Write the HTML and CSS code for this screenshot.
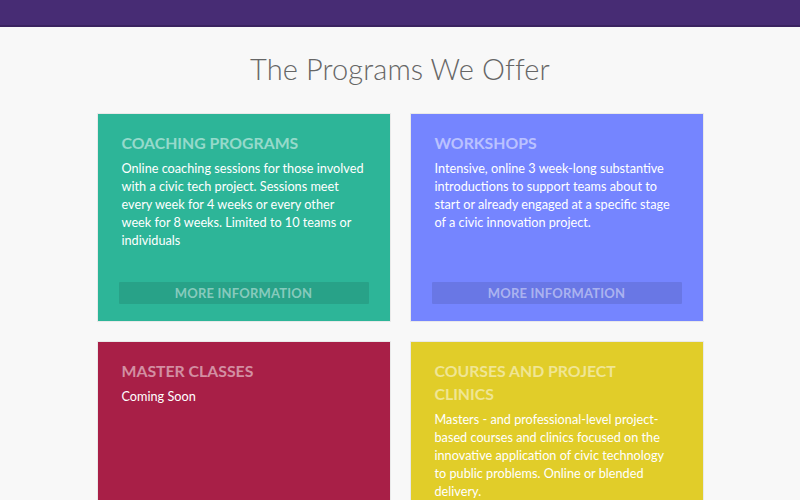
FILE: index.html
```html
<!DOCTYPE html>
<html>
<head>
<meta charset="utf-8">
<link rel="stylesheet" href="styles.css">
</head>
<body>
<header class="topbar"></header>
<main class="programs">
  <h1 class="title">The Programs We Offer</h1>
  <div class="grid">
    <section class="card teal">
      <div class="card-body">
        <h2 class="card-title">Coaching Programs</h2>
        <p class="card-text">Online coaching sessions for those involved with a civic tech project. Sessions meet every week for 4 weeks or every other week for 8 weeks. Limited to 10 teams or individuals</p>
      </div>
      <a class="more">More Information</a>
    </section>
    <section class="card blue">
      <div class="card-body">
        <h2 class="card-title">Workshops</h2>
        <p class="card-text">Intensive, online 3 week-long substantive introductions to support teams about to start or already engaged at a specific stage of a civic innovation project.</p>
      </div>
      <a class="more">More Information</a>
    </section>
    <section class="card crimson">
      <div class="card-body">
        <h2 class="card-title">Master Classes</h2>
        <p class="card-text">Coming Soon</p>
      </div>
    </section>
    <section class="card yellow">
      <div class="card-body">
        <h2 class="card-title">Courses and Project Clinics</h2>
        <p class="card-text">Masters - and professional-level project-based courses and clinics focused on the innovative application of civic technology to public problems. Online or blended delivery.</p>
      </div>
    </section>
  </div>
</main>
</body>
</html>
```
FILE: styles.css
```css
html, body {
  margin: 0;
  padding: 0;
}
body {
  background: #f8f8f8;
  font-family: Lato, "Open Sans", sans-serif;
  overflow: hidden;
}
.topbar {
  height: 25px;
  background: #472c74;
  border-bottom: 2px solid #3a2360;
}
.programs {
  display: flex;
  flex-direction: column;
  align-items: center;
}
.title {
  margin: 24px 0 0;
  font-weight: 300;
  font-size: 29px;
  line-height: 36px;
  color: #666;
  letter-spacing: 0.1px;
}
.grid {
  margin-top: 26px;
  display: grid;
  grid-template-columns: 294px 294px;
  grid-auto-rows: 209px;
  gap: 19px;
}
.card {
  box-sizing: border-box;
  border: 1px solid rgba(0,0,0,0.06);
  background-clip: padding-box;
  display: flex;
  flex-direction: column;
  justify-content: space-between;
  padding: 0 21px 17px;
}
.card-body {
  padding: 17px 0 0 3px;
}
.card-title {
  margin: 0;
  max-width: 232px;
  font-size: 15.8px;
  line-height: 23px;
  font-weight: 700;
  text-transform: uppercase;
  color: rgba(255,255,255,0.5);
}
.card-text {
  margin: 5px 0 0;
  width: 243px;
  font-size: 12.7px;
  line-height: 18px;
  color: #fff;
}
.more {
  display: block;
  height: 22px;
  line-height: 22px;
  text-align: center;
  background: rgba(0,0,0,0.1);
  border-radius: 1px;
  font-size: 13px;
  font-weight: 700;
  text-transform: uppercase;
  color: rgba(255,255,255,0.45);
  letter-spacing: 0.2px;
}
.teal { background-color: #2db598; }
.blue { background-color: #7585ff; }
.crimson { background-color: #a81f47; }
.yellow { background-color: #e1cd29; }
```
